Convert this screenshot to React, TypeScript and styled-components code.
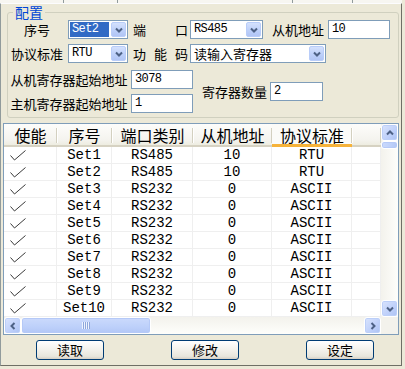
import styled, { createGlobalStyle } from "styled-components";

const GlobalStyle = createGlobalStyle`
  html, body {
    margin: 0;
    padding: 0;
    background: #ece9d8;
  }
  body {
    width: 405px;
    height: 369px;
    overflow: hidden;
    font-family: "Noto Sans CJK SC", sans-serif;
    color: #000;
  }
`;

const COLS = "53px 55px 81px 79px 80px 1fr";
const CJK = `"Noto Sans CJK SC", sans-serif`;
const LATIN = `"Liberation Mono", "Noto Sans CJK SC", monospace`;

const Window = styled.div`
  width: 405px;
  height: 369px;
  background: #ece9d8;
`;

const TabEdge = styled.div`
  display: flex;
  width: 402px;
  height: 3px;
  background: #f7f6f1;
`;

const TabStub = styled.div<{ $w: number }>`
  flex: none;
  width: ${(p) => p.$w}px;
  box-sizing: border-box;
  border-right: 1px solid #919b9c;
`;

const Panel = styled.div`
  width: 402px;
  height: 363px;
  box-sizing: border-box;
  border: 1px solid #919b9c;
  border-top-color: #fcfcfe;
  border-bottom-color: #6f6f66;
  border-right-color: #6f6f66;
  padding: 0 2px;
  display: flex;
  flex-direction: column;
`;

const Group = styled.fieldset`
  margin: 0 0 0 4px;
  padding: 0 2px 4px 2px;
  border: 1px solid #d0d0bf;
  border-radius: 3px;
  min-width: 0;
  display: flex;
  flex-direction: column;
`;

const GroupTitle = styled.legend`
  margin-left: 3px;
  padding: 0 2px;
  color: #0046d5;
  font-family: ${CJK};
  font-size: 14px;
  line-height: 16px;
`;

const FormRow = styled.div<{ $mt?: number }>`
  display: flex;
  align-items: center;
  height: 19px;
  margin-top: ${(p) => p.$mt ?? 0}px;
`;

const Label = styled.span<{ $w: number; $gap?: number; $spread?: boolean }>`
  flex: none;
  width: ${(p) => p.$w}px;
  margin-left: ${(p) => p.$gap ?? 0}px;
  font-family: ${CJK};
  font-size: 13px;
  line-height: 19px;
  white-space: nowrap;
  text-align: ${(p) => (p.$spread ? "justify" : "center")};
  text-align-last: ${(p) => (p.$spread ? "justify" : "center")};
`;

const Combo = styled.div<{ $w: number; $gap?: number }>`
  flex: none;
  width: ${(p) => p.$w}px;
  height: 19px;
  margin-left: ${(p) => p.$gap ?? 0}px;
  box-sizing: border-box;
  border: 1px solid #7f9db9;
  background: #fff;
  padding: 1px;
  display: flex;
  gap: 2px;
`;

const ComboText = styled.span<{ $selected?: boolean }>`
  flex: 1;
  min-width: 0;
  padding-left: 2px;
  font-family: ${LATIN};
  font-size: 12px;
  letter-spacing: -0.6px;
  line-height: 15px;
  white-space: nowrap;
  background: ${(p) => (p.$selected ? "#316ac5" : "transparent")};
  color: ${(p) => (p.$selected ? "#fff" : "#000")};
`;

const ComboCjk = styled(ComboText)`
  font-family: ${CJK};
  font-size: 13px;
  letter-spacing: 0;
`;

const DropButton = styled.span`
  flex: none;
  width: 15px;
  box-sizing: border-box;
  border: 1px solid #b9cdf9;
  border-radius: 2px;
  background: linear-gradient(#d4e1fd, #bccff9 60%, #b1c5f5);
  display: flex;
  align-items: center;
  justify-content: center;
`;

const Field = styled.div<{ $w: number; $gap?: number }>`
  flex: none;
  width: ${(p) => p.$w}px;
  height: 19px;
  margin-left: ${(p) => p.$gap ?? 0}px;
  box-sizing: border-box;
  border: 1px solid #7f9db9;
  background: #fff;
  padding-left: 3px;
  font-family: ${LATIN};
  font-size: 12px;
  letter-spacing: -0.6px;
  line-height: 17px;
`;

const AddrBlock = styled.div`
  display: flex;
  align-items: center;
  margin-top: 7px;
`;

const AddrColumn = styled.div`
  display: flex;
  flex-direction: column;
  gap: 5px;
`;

const ListView = styled.div`
  margin-top: 5px;
  height: 212px;
  box-sizing: border-box;
  border: 1px solid #7f9db9;
  background: #fff;
  display: grid;
  grid-template-columns: 1fr 17px;
  grid-template-rows: 1fr 17px;
  overflow: hidden;
`;

const ListBody = styled.div`
  overflow: hidden;
`;

const HeaderRow = styled.div`
  display: grid;
  grid-template-columns: ${COLS};
  height: 23px;
  background: linear-gradient(#fdfdfb, #f4f3ee 70%, #ebeadb);
  box-shadow: inset 0 -2px 0 #d6d2c2;
`;

const HeaderCell = styled.div<{ $hot?: boolean }>`
  position: relative;
  font-family: ${CJK};
  font-size: 16px;
  line-height: 22px;
  text-align: center;
  white-space: nowrap;
  background: ${(p) => (p.$hot ? "#fbfbf8" : "transparent")};
  box-shadow: ${(p) => (p.$hot ? "inset 0 -3px 0 #f6b33a" : "none")};
  &::after {
    content: "";
    position: absolute;
    right: 0;
    top: 4px;
    bottom: 4px;
    width: 1px;
    background: #d3d0c0;
    box-shadow: 1px 0 0 #fff;
  }
`;

const Row = styled.div`
  display: grid;
  grid-template-columns: ${COLS};
  height: 17px;
`;

const Cell = styled.div<{ $left?: boolean }>`
  box-sizing: border-box;
  border-right: 1px solid #efefef;
  border-bottom: 1px solid #efefef;
  display: flex;
  align-items: center;
  justify-content: ${(p) => (p.$left ? "flex-start" : "center")};
  padding-left: ${(p) => (p.$left ? 6 : 0)}px;
  font-family: ${LATIN};
  font-size: 14px;
  line-height: 16px;
  white-space: nowrap;
`;

const VScroll = styled.div`
  display: flex;
  flex-direction: column;
  background: linear-gradient(90deg, #f3f2ec, #fefefb);
`;

const HScroll = styled.div`
  display: flex;
  background: linear-gradient(#f3f2ec, #fefefb);
`;

const Corner = styled.div`
  background: #f3f2ec;
`;

const ScrollButton = styled.div`
  flex: none;
  width: 17px;
  height: 17px;
  box-sizing: border-box;
  border: 1px solid #fff;
  border-radius: 3px;
  background: linear-gradient(135deg, #d9e4fd, #bed0fa 60%, #acc2f3);
  box-shadow: inset 0 0 0 1px #bccff8;
  display: flex;
  align-items: center;
  justify-content: center;
`;

const Track = styled.div<{ $vertical?: boolean }>`
  flex: 1;
  display: flex;
  flex-direction: ${(p) => (p.$vertical ? "column" : "row")};
`;

const Thumb = styled.div<{ $len: number; $vertical?: boolean }>`
  flex: none;
  ${(p) => (p.$vertical ? `height: ${p.$len}px; width: 17px;` : `width: ${p.$len}px; height: 17px;`)}
  box-sizing: border-box;
  border: 1px solid #fff;
  border-radius: 3px;
  background: ${(p) =>
    p.$vertical
      ? "linear-gradient(90deg, #cbdafc, #bdd0fa 60%, #b2c7f6)"
      : "linear-gradient(#cbdafc, #bdd0fa 60%, #b2c7f6)"};
  box-shadow: inset 0 0 0 1px #b5c9f7;
  display: flex;
  align-items: center;
  justify-content: center;
`;

const Grip = styled.div`
  width: 8px;
  height: 7px;
  background: repeating-linear-gradient(90deg, #eef3fe 0 1px, #8fa8dc 1px 2px);
`;

const ButtonBar = styled.div`
  display: flex;
  gap: 67px;
  margin-top: 5px;
  padding-left: 33px;
`;

const PushButton = styled.button`
  width: 68px;
  height: 20px;
  box-sizing: border-box;
  padding: 0;
  border: 1px solid #003c74;
  border-radius: 3px;
  background: linear-gradient(#ffffff, #f5f4ef 40%, #e8e6dc 85%, #d6d0c5);
  font-family: ${CJK};
  font-size: 13px;
  line-height: 18px;
  color: #000;
`;

function Chevron({ dir = "down" }: { dir?: "up" | "down" | "left" | "right" }) {
  const rot = { down: 0, up: 180, left: 90, right: -90 }[dir];
  return (
    <svg width="8" height="6" viewBox="0 0 8 6" style={{ transform: `rotate(${rot}deg)` }}>
      <polyline points="1,1.5 4,4.5 7,1.5" fill="none" stroke="#4d6185" strokeWidth="2" />
    </svg>
  );
}

function Check() {
  return (
    <svg width="16" height="11" viewBox="0 0 16 11">
      <polyline points="0.5,5.5 4.5,10 15.5,0.5" fill="none" stroke="#3a3a3a" strokeWidth="1" />
    </svg>
  );
}

const rows = [
  { id: "Set1", port: "RS485", addr: "10", proto: "RTU" },
  { id: "Set2", port: "RS485", addr: "10", proto: "RTU" },
  { id: "Set3", port: "RS232", addr: "0", proto: "ASCII" },
  { id: "Set4", port: "RS232", addr: "0", proto: "ASCII" },
  { id: "Set5", port: "RS232", addr: "0", proto: "ASCII" },
  { id: "Set6", port: "RS232", addr: "0", proto: "ASCII" },
  { id: "Set7", port: "RS232", addr: "0", proto: "ASCII" },
  { id: "Set8", port: "RS232", addr: "0", proto: "ASCII" },
  { id: "Set9", port: "RS232", addr: "0", proto: "ASCII" },
  { id: "Set10", port: "RS232", addr: "0", proto: "ASCII" },
];

export default function App() {
  return (
    <>
      <GlobalStyle />
      <Window>
        <TabEdge>
          <TabStub $w={64} />
          <TabStub $w={54} />
          <TabStub $w={175} />
          <TabStub $w={60} />
        </TabEdge>
        <Panel>
          <Group>
            <GroupTitle>配置</GroupTitle>
            <FormRow>
              <Label $w={54}>序号</Label>
              <Combo $w={60} $gap={4}>
                <ComboText $selected>Set2</ComboText>
                <DropButton><Chevron /></DropButton>
              </Combo>
              <Label $w={55} $gap={5} $spread>端 口</Label>
              <Combo $w={73} $gap={2}>
                <ComboText>RS485</ComboText>
                <DropButton><Chevron /></DropButton>
              </Combo>
              <Label $w={52} $gap={9}>从机地址</Label>
              <Field $w={62} $gap={4}>10</Field>
            </FormRow>
            <FormRow $mt={5}>
              <Label $w={54}>协议标准</Label>
              <Combo $w={60} $gap={4}>
                <ComboText>RTU</ComboText>
                <DropButton><Chevron /></DropButton>
              </Combo>
              <Label $w={55} $gap={5} $spread>功 能 码</Label>
              <Combo $w={136} $gap={2}>
                <ComboCjk>读输入寄存器</ComboCjk>
                <DropButton><Chevron /></DropButton>
              </Combo>
            </FormRow>
            <AddrBlock>
              <AddrColumn>
                <FormRow>
                  <Label $w={118}>从机寄存器起始地址</Label>
                  <Field $w={62} $gap={3}>3078</Field>
                </FormRow>
                <FormRow>
                  <Label $w={118}>主机寄存器起始地址</Label>
                  <Field $w={62} $gap={3}>1</Field>
                </FormRow>
              </AddrColumn>
              <Label $w={63} $gap={9}>寄存器数量</Label>
              <Field $w={53} $gap={5}>2</Field>
            </AddrBlock>
          </Group>

          <ListView>
            <ListBody>
              <HeaderRow>
                <HeaderCell>使能</HeaderCell>
                <HeaderCell>序号</HeaderCell>
                <HeaderCell>端口类别</HeaderCell>
                <HeaderCell>从机地址</HeaderCell>
                <HeaderCell $hot>协议标准</HeaderCell>
                <HeaderCell />
              </HeaderRow>
              {rows.map((r) => (
                <Row key={r.id}>
                  <Cell $left><Check /></Cell>
                  <Cell>{r.id}</Cell>
                  <Cell>{r.port}</Cell>
                  <Cell>{r.addr}</Cell>
                  <Cell>{r.proto}</Cell>
                  <Cell />
                </Row>
              ))}
            </ListBody>
            <VScroll>
              <ScrollButton><Chevron dir="up" /></ScrollButton>
              <Track $vertical>
                <Thumb $vertical $len={8} />
              </Track>
              <ScrollButton><Chevron dir="down" /></ScrollButton>
            </VScroll>
            <HScroll>
              <ScrollButton><Chevron dir="left" /></ScrollButton>
              <Track>
                <Thumb $len={130}><Grip /></Thumb>
              </Track>
              <ScrollButton><Chevron dir="right" /></ScrollButton>
            </HScroll>
            <Corner />
          </ListView>

          <ButtonBar>
            <PushButton>读取</PushButton>
            <PushButton>修改</PushButton>
            <PushButton>设定</PushButton>
          </ButtonBar>
        </Panel>
      </Window>
    </>
  );
}
